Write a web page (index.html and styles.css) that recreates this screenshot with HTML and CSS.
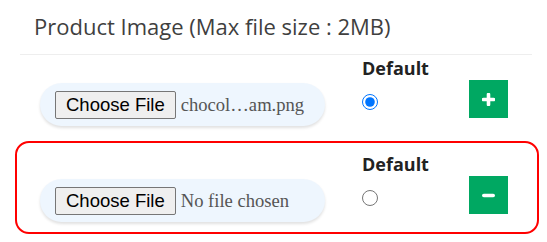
FILE: index.html
```html
<!DOCTYPE html>
<html lang="en">
<head>
    <meta charset="UTF-8">
    <meta name="viewport" content="width=device-width, initial-scale=1.0">
    <title>Product Image</title>
    <link rel="stylesheet" href="styles.css">
</head>
<body>
    <div class="panel">
        <div class="panel-head">
            <h2>Product Image (Max file size : 2MB)</h2>
        </div>
        <div class="img-row first">
            <label class="file-pick">
                <input type="file" name="image[]" accept="image/*">
                <span class="file-btn">Choose File</span>
                <span class="file-name">chocol…am.png</span>
            </label>
            <div class="default-col">
                <span class="default-label">Default</span>
                <input type="radio" name="default" checked>
            </div>
            <button class="row-btn" title="Add image">
                <svg width="13" height="13" viewBox="0 0 13 13"><path d="M6.5 1.5v10M1.5 6.5h10" stroke="#fff" stroke-width="3.6" stroke-linecap="round"/></svg>
            </button>
        </div>
        <div class="img-row invalid">
            <label class="file-pick">
                <input type="file" name="image[]" accept="image/*">
                <span class="file-btn">Choose File</span>
                <span class="file-name">No file chosen</span>
            </label>
            <div class="default-col">
                <span class="default-label">Default</span>
                <input type="radio" name="default">
            </div>
            <button class="row-btn" title="Remove image">
                <svg width="13" height="13" viewBox="0 0 13 13"><path d="M1.8 6.5h9.4" stroke="#fff" stroke-width="3.6" stroke-linecap="round"/></svg>
            </button>
        </div>
    </div>
</body>
</html>
```

FILE: styles.css
```css
body {
    margin: 0;
    background: #fff;
    font-family: "Open Sans", Arial, sans-serif;
}
.panel {
    padding: 0 8px 0 15px;
}
.panel-head {
    margin: 0 7px 0 5px;
    padding: 13px 0 15px 14px;
    border-bottom: 1px solid #eeeeee;
}
.panel-head h2 {
    margin: 0;
    font-size: 22px;
    font-weight: 500;
    line-height: 1.2;
    color: #3f3f3f;
}
.img-row {
    display: grid;
    grid-template-columns: 322px 107px 39px;
    align-items: start;
    padding: 10px 23px 10px;
    border: 2px solid transparent;
    border-radius: 14px;
}
.img-row.first {
    padding-top: 0;
    padding-bottom: 7px;
    margin-bottom: 6px;
}
.img-row.invalid {
    border-color: #ff0000;
}
.file-pick {
    display: flex;
    align-items: center;
    width: 285px;
    box-sizing: border-box;
    margin-top: 26px;
    padding: 8px 15px 7px;
    background: #eef6fe;
    border-radius: 22px;
    box-shadow: 0 2px 3px rgba(0, 0, 0, 0.12);
    cursor: pointer;
}
.file-pick input {
    display: none;
}
.file-btn {
    box-sizing: border-box;
    height: 28px;
    padding: 0 10px;
    line-height: 26px;
    font-family: "Liberation Sans", Arial, sans-serif;
    font-size: 18.5px;
    color: #000;
    background: #efefef;
    border: 1px solid #767676;
    border-radius: 2px;
}
.file-name {
    margin-left: 5px;
    font-family: "Liberation Serif", "Times New Roman", serif;
    font-size: 18.6px;
    color: #555;
    white-space: nowrap;
}
.default-col {
    display: flex;
    flex-direction: column;
    align-items: flex-start;
}
.default-label {
    font-size: 18px;
    font-weight: 700;
    line-height: 22px;
    color: #222;
}
.default-col input {
    width: 16px;
    height: 16px;
    margin: 15px 0 0 0;
}
.row-btn {
    display: flex;
    align-items: center;
    justify-content: center;
    width: 39px;
    height: 38px;
    margin-top: 23px;
    padding: 0;
    border: none;
    background: #00a862;
    cursor: pointer;
}
```
